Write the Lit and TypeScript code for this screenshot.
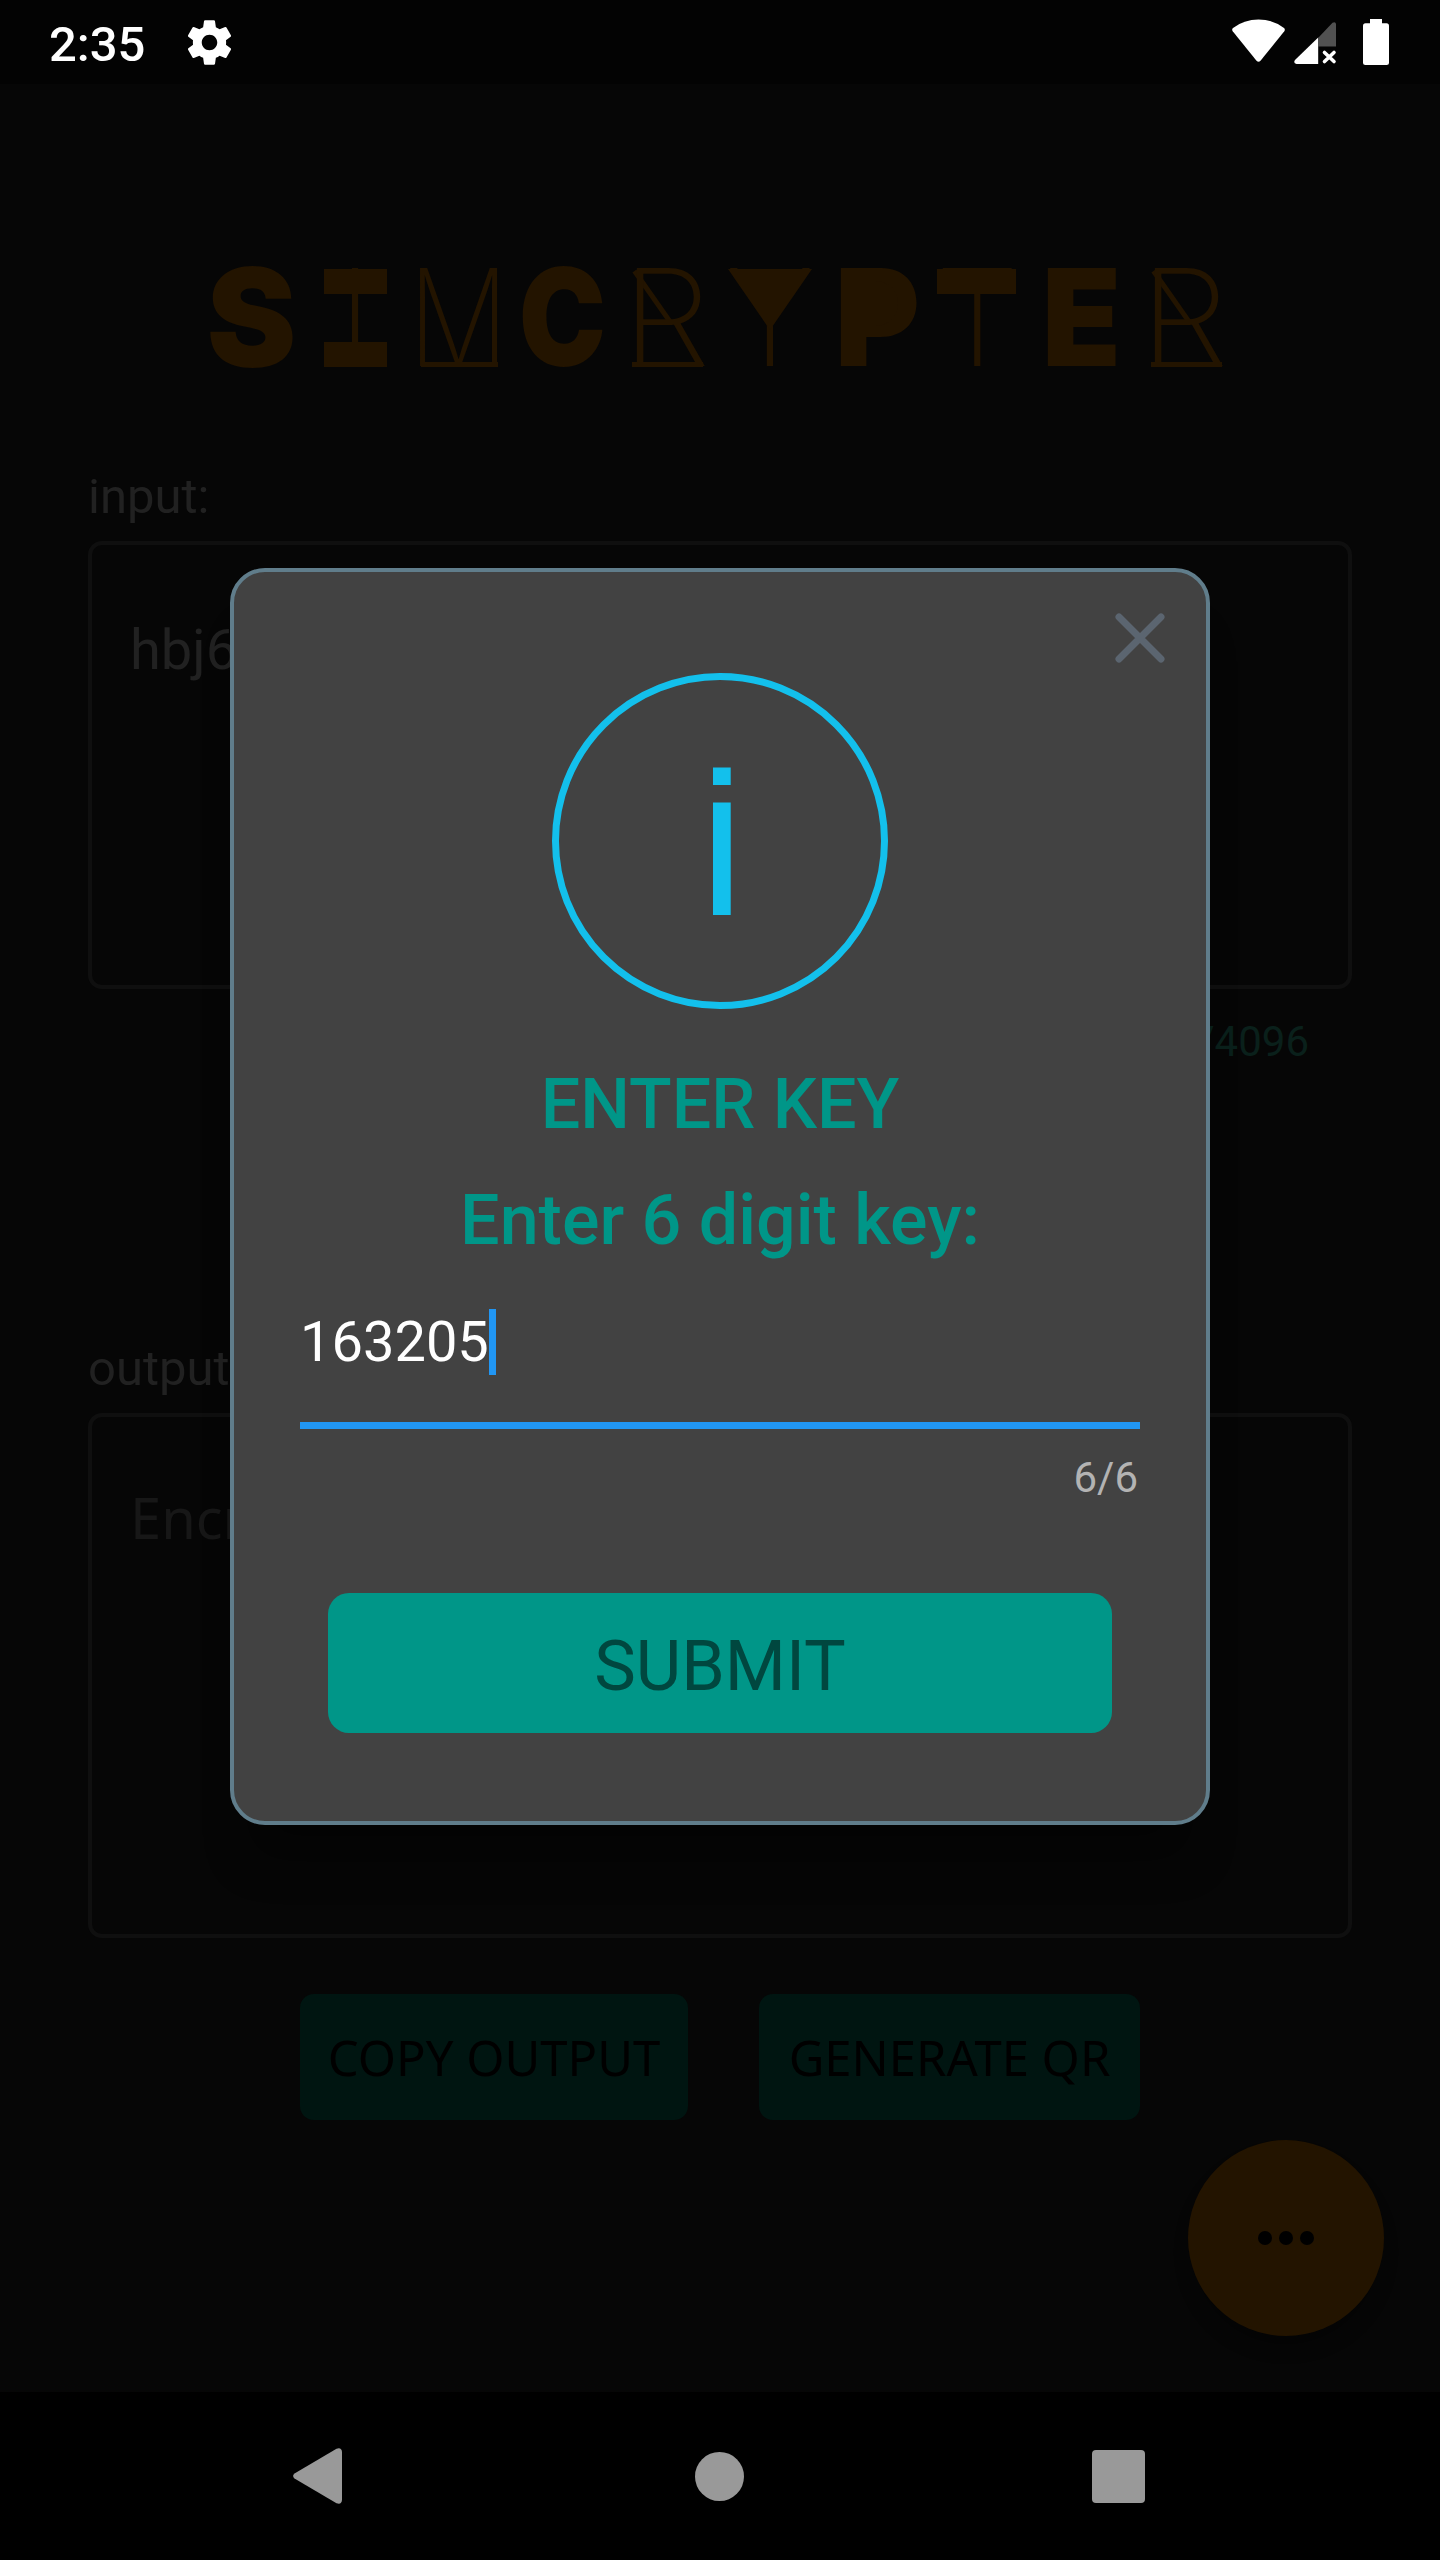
import { LitElement, html, css } from "lit";
import { customElement } from "lit/decorators.js";

const WORDMARK: Array<[string, string]> = [
  ["S", "heavy s"],
  ["I", "thin slab-i"],
  ["M", "thin base-m"],
  ["C", "heavy c"],
  ["R", "thin base-r"],
  ["Y", "thin wedge"],
  ["P", "heavy bowl"],
  ["T", "thin slab-t"],
  ["E", "heavy e"],
  ["R", "thin base-r"],
];

@customElement("status-bar")
class StatusBar extends LitElement {
  static styles = css`
    :host { display: flex; align-items: flex-start; height: 84px; background: #030303; color: #fff; padding-left: 49px; padding-right: 51px; box-sizing: border-box; }
    .time { font: 500 49px/80px Roboto, sans-serif; padding-top: 5px; width: 139px; }
    svg { display: block; }
    .gear { margin-top: 20px; }
    .space { flex: 1; }
    .wifi { margin-top: 19px; margin-right: 9px; }
    .signal { margin-top: 21px; margin-right: 26px; }
    .battery { margin-top: 19px; }
  `;
  render() {
    return html`
      <span class="time">2:35</span>
      <svg class="gear" width="43" height="45" viewBox="2.3 2 19.4 20" fill="#fff">
        <path d="M19.43 12.98c.04-.32.07-.64.07-.98s-.03-.66-.07-.98l2.11-1.65c.19-.15.24-.42.12-.64l-2-3.46c-.12-.22-.39-.3-.61-.22l-2.49 1c-.52-.4-1.08-.73-1.69-.98l-.38-2.65C14.46 2.18 14.25 2 14 2h-4c-.25 0-.46.18-.49.42l-.38 2.65c-.61.25-1.17.59-1.69.98l-2.49-1c-.23-.09-.49 0-.61.22l-2 3.46c-.13.22-.07.49.12.64l2.11 1.65c-.04.32-.07.65-.07.98s.03.66.07.98l-2.11 1.65c-.19.15-.24.42-.12.64l2 3.46c.12.22.39.3.61.22l2.49-1c.52.4 1.08.73 1.69.98l.38 2.65c.03.24.24.42.49.42h4c.25 0 .46-.18.49-.42l.38-2.65c.61-.25 1.17-.59 1.69-.98l2.49 1c.23.09.49 0 .61-.22l2-3.46c.12-.22.07-.49-.12-.64l-2.11-1.65zM12 15.5c-1.93 0-3.5-1.57-3.5-3.5s1.57-3.5 3.5-3.5 3.5 1.57 3.5 3.5-1.57 3.5-3.5 3.5z"/>
      </svg>
      <span class="space"></span>
      <svg class="wifi" width="53" height="44" viewBox="0 0 53 44" fill="#fff">
        <path d="M1 9Q12 .5 26.500 .5T52 9Q53.500 10.500 52.300 12.200L28.500 41.800Q26.500 43.800 24.500 41.800L.7 12.200Q-.5 10.500 1 9Z"/>
      </svg>
      <svg class="signal" width="43" height="44" viewBox="0 0 43 44">
        <path d="M24.500 16.500L38.500 1.800Q41.500 0 42 3V25.500H24.500Z" fill="#515151"/>
        <path d="M24.200 16.500V43H2.500Q-1 42 1 39Z" fill="#fff"/>
        <path d="M30.500 31.500L40 40.500M40 31.500L30.500 40.500" stroke="#fff" stroke-width="3.600" stroke-linecap="round"/>
      </svg>
      <svg class="battery" width="26" height="46" viewBox="0 0 26 46" fill="#fff">
        <path d="M7 0H19V4.300H23.500Q26 4.300 26 7V43.500Q26 46 23.500 46H2.500Q0 46 0 43.500V7Q0 4.300 2.500 4.300H7Z"/>
      </svg>`;
  }
}

@customElement("word-mark")
class WordMark extends LitElement {
  static styles = css`
    :host { display: grid; grid-template-columns: repeat(10, 103.7px); justify-content: center; height: 98px; color: #231400; padding-right: 4px; }
    .cell { position: relative; display: flex; justify-content: center; height: 98px; font-family: Inter, sans-serif; font-size: 135px; line-height: 97px; }
    .glyph { display: block; }
    .heavy { font-weight: 900; }
    .thin { font-weight: 250; }
    .s .glyph { transform: scale(1, 1.02); }
    .c .glyph { transform: scaleX(.865); }
    .e .glyph { transform: scaleX(.96); }
    .bowl .glyph { transform: translateX(4px) scaleX(.96); }
    .base-m .glyph { transform: scaleX(.83); }
    .base-r .glyph { transform: scaleX(1.05); }
    .slab-i::before, .slab-i::after, .slab-t::before, .base-m::after, .base-r::after, .base-r::before { content: ""; position: absolute; background: #231400; }
    .slab-i::before { left: 21px; width: 63px; top: 0; height: 25px; }
    .slab-i::after { left: 21px; width: 63px; bottom: 0; height: 25px; }
    .slab-t::before { left: 12px; width: 79px; top: 0; height: 25px; }
    .base-m::after { left: 14px; width: 77px; bottom: 0; height: 5px; }
    .base-r::after { left: 18px; width: 71px; bottom: 0; height: 5px; }
    .base-r::before { left: 18px; top: 2px; width: 5px; height: 64px; transform-origin: top center; transform: rotate(-35deg); }
    .wedge::before { content: ""; position: absolute; left: 10px; top: 0; border: solid transparent; border-width: 61px 42px 0; border-top-color: #231400; }
    .bowl::after { content: ""; position: absolute; left: 32px; top: 12px; width: 44px; height: 45px; background: #231400; border-radius: 0 22px 22px 0; }
  `;
  render() {
    return WORDMARK.map(([ch, kind]) => html`<span class="cell ${kind}"><span class="glyph">${ch}</span></span>`);
  }
}

@customElement("key-dialog")
class KeyDialog extends LitElement {
  static styles = css`
    :host { display: flex; flex-direction: column; box-sizing: border-box; width: 980px; height: 1257px; border: 4px solid #607d8b; border-radius: 35px; background: #424242; box-shadow: 0 52px 44px -20px rgba(0, 0, 0, .4); padding: 0 66px; font-family: Roboto, sans-serif; }
    svg { display: block; }
    .close { align-self: flex-end; margin: 41px -25px 0 0; }
    .info { align-self: center; margin-top: 10px; }
    .head { color: #009688; font-size: 70px; font-weight: 500; text-align: center; height: 82px; line-height: 82px; }
    .title { margin-top: 54px; }
    .prompt { margin-top: 34px; }
    .entry { display: flex; align-items: center; margin-top: 48px; height: 66px; color: #fff; font-size: 56px; line-height: 66px; }
    .caret { width: 7px; height: 66px; background: #2196f3; }
    .rule { margin-top: 47px; height: 7px; background: #2196f3; }
    .count { margin-top: 24px; height: 49px; padding-right: 2px; color: #b3b3b3; font-size: 42px; line-height: 49px; text-align: right; }
    .submit { display: block; margin: 91px 28px 0; height: 140px; padding: 0; border: 0; border-radius: 21px; background: #009688; color: #00473f; font: 400 70px/146px Roboto, sans-serif; }
  `;
  render() {
    return html`
      <svg class="close" width="50" height="50" viewBox="0 0 50 50" fill="none" stroke="#5b6570" stroke-width="7" stroke-linecap="round">
        <path d="M4 4L46 46M46 4L4 46"/>
      </svg>
      <svg class="info" width="336" height="336" viewBox="0 0 336 336">
        <circle cx="168" cy="168" r="164.500" fill="none" stroke="#13c0ec" stroke-width="7"/>
        <rect x="161" y="94.500" width="17.700" height="17.500" fill="#13c0ec"/>
        <rect x="161" y="129.500" width="17.700" height="112.500" fill="#13c0ec"/>
      </svg>
      <div class="head title">ENTER KEY</div>
      <div class="head prompt">Enter 6 digit key:</div>
      <div class="entry"><span>163205</span><span class="caret"></span></div>
      <div class="rule"></div>
      <div class="count">6/6</div>
      <button class="submit">SUBMIT</button>`;
  }
}

@customElement("nav-bar")
class NavBar extends LitElement {
  static styles = css`
    :host { display: flex; align-items: center; justify-content: space-between; box-sizing: border-box; height: 168px; padding: 0 295px 0 293px; background: #000; }
    svg { display: block; }
    .home { margin-left: 5px; }
  `;
  render() {
    return html`
      <svg width="49" height="56" viewBox="0 0 49 56" fill="#999"><path d="M43.500 .8Q48.500-1 49 4V52Q48.500 57 43.500 55.200L1.500 30.500Q-1.300 28 1.500 25.500Z"/></svg>
      <svg class="home" width="49" height="49" viewBox="0 0 49 49" fill="#999"><circle cx="24.500" cy="24.500" r="24.500"/></svg>
      <svg width="53" height="53" viewBox="0 0 53 53" fill="#999"><rect width="53" height="53" rx="4"/></svg>`;
  }
}

@customElement("app-root")
class AppRoot extends LitElement {
  static styles = css`
    :host { display: flex; flex-direction: column; position: relative; width: 1440px; height: 2560px; overflow: hidden; background: #060606; }
    main { flex: 1; display: flex; flex-direction: column; padding: 185px 88px 0; }
    .label { height: 58px; color: #212121; font: 400 49px/58px Roboto, "Noto Sans", sans-serif; }
    .input-label { margin-top: 101px; }
    .field { box-sizing: border-box; border: 4px solid #0f0f0f; border-radius: 14px; margin-top: 15px; font: 400 56px/76px "Noto Sans", sans-serif; }
    .input { height: 448px; padding: 67px 38px 0; color: #212121; font-family: Roboto, sans-serif; }
    .output { height: 525px; padding: 62px 38px 0; color: #171717; }
    .limit { margin-top: 28px; height: 49px; color: #0a201b; font: 400 42px/49px Roboto, sans-serif; text-align: right; padding-right: 43px; }
    .output-label { margin-top: 274px; }
    .actions { display: flex; gap: 71px; margin-top: 56px; padding-left: 212px; }
    .actions button { border: 0; padding: 0; height: 126px; border-radius: 14px; background: #001511; color: #000; font: 400 49px/126px "Noto Sans", sans-serif; }
    .copy { width: 388px; }
    .qr { width: 381px; }
    .fab { position: absolute; left: 1188px; top: 2140px; width: 196px; height: 196px; border-radius: 50%; background: #231400; display: flex; align-items: center; justify-content: center; gap: 7px; box-shadow: 0 14px 18px -4px rgba(0, 0, 0, .3); }
    .dot { width: 14px; height: 14px; border-radius: 50%; background: #000; }
    key-dialog { position: absolute; left: 230px; top: 568px; }
  `;
  render() {
    return html`
      <status-bar></status-bar>
      <main>
        <word-mark></word-mark>
        <div class="label input-label">input:</div>
        <div class="field input">hbj6</div>
        <div class="limit">/4096</div>
        <div class="label output-label">output:</div>
        <div class="field output">Encr</div>
        <div class="actions">
          <button class="copy">COPY OUTPUT</button>
          <button class="qr">GENERATE QR</button>
        </div>
      </main>
      <nav-bar></nav-bar>
      <div class="fab"><span class="dot"></span><span class="dot"></span><span class="dot"></span></div>
      <key-dialog></key-dialog>`;
  }
}
